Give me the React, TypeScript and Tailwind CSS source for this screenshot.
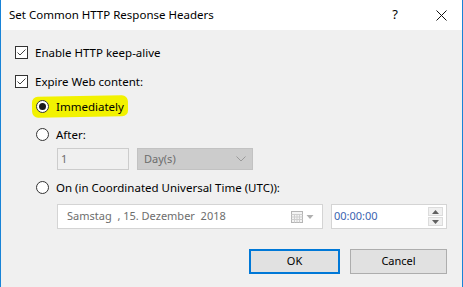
import React from 'react';

const font = { fontFamily: '"Noto Sans", "Open Sans", sans-serif' };

function CheckBox() {
  return (
    <span className="w-[13px] h-[13px] border border-[#333333] bg-white flex items-center justify-center shrink-0">
      <svg width="11" height="11" viewBox="0 0 11 11">
        <path d="M1.5 5.5 L4 8 L9.5 2.5" fill="none" stroke="#444444" strokeWidth="1" />
      </svg>
    </span>
  );
}

function Radio({ checked }: { checked?: boolean }) {
  return (
    <span className="w-[13px] h-[13px] rounded-full border border-[#333333] bg-white flex items-center justify-center shrink-0">
      {checked && <span className="w-[7px] h-[7px] rounded-full bg-[#1a1a1a]"></span>}
    </span>
  );
}

function Chevron() {
  return (
    <svg width="10" height="6" viewBox="0 0 10 6">
      <path d="M0.5 0.5 L5 5 L9.5 0.5" fill="none" stroke="#9a9a9a" strokeWidth="1" />
    </svg>
  );
}

export default function App() {
  return (
    <div className="w-[463px] h-[287px] bg-[#f0f0f0] border-l border-r border-[#1883d7] flex flex-col text-[11px] text-black overflow-hidden" style={font}>
      {/* title bar */}
      <div className="h-[30px] bg-white flex items-center pl-[8px] shrink-0">
        <span className="flex-1 text-[11.5px]">Set Common HTTP Response Headers</span>
        <span className="w-[14px] text-center text-[13px] mr-[34px]">?</span>
        <svg width="11" height="11" viewBox="0 0 11 11" className="mr-[15px]">
          <path d="M0.5 0.5 L10.5 10.5 M10.5 0.5 L0.5 10.5" stroke="#111111" strokeWidth="1" />
        </svg>
      </div>

      <div className="flex flex-col pl-[14px] pt-[16px] text-[11.5px]">
        <div className="h-[13px] flex items-center gap-[7px]">
          <CheckBox />
          <span>Enable HTTP keep-alive</span>
        </div>
        <div className="h-[13px] flex items-center gap-[7px] mt-[16px]">
          <CheckBox />
          <span>Expire Web content:</span>
        </div>

        <div className="flex flex-col pl-[21px]">
          <div className="relative h-[13px] flex items-center gap-[7px] mt-[12px]">
            <span className="absolute left-[-4px] top-[-4px] w-[96px] h-[21px] bg-[#f2f200] rounded-[6px] -rotate-1"></span>
            <span className="relative z-10 flex items-center gap-[7px]">
              <Radio checked />
              <span>Immediately</span>
            </span>
          </div>
          <div className="h-[13px] flex items-center gap-[7px] mt-[15px]">
            <Radio />
            <span>After:</span>
          </div>
          <div className="flex items-center gap-[8px] mt-[7px] pl-[21px] text-[11px]">
            <div className="w-[72px] h-[22px] border border-[#cccccc] bg-[#f0f0f0] flex items-center pl-[3px] text-[#6d6d6d]">1</div>
            <div className="w-[116px] h-[22px] border border-[#c2c2c2] bg-[#cccccc] flex items-center pl-[6px] pr-[6px] text-[#6d6d6d]">
              <span className="flex-1">Day(s)</span>
              <Chevron />
            </div>
          </div>
          <div className="h-[13px] flex items-center gap-[7px] mt-[11px]">
            <Radio />
            <span>On (in Coordinated Universal Time (UTC)):</span>
          </div>
          <div className="flex items-center gap-[8px] mt-[10px] pl-[21px] text-[11px]">
            <div className="w-[266px] h-[25px] border border-[#d4d4d4] bg-white flex items-center pl-[9px] pr-[4px] text-[#6d6d6d]">
              <span className="flex-1 whitespace-pre">Samstag  , 15. Dezember  2018</span>
              <svg width="12" height="12" viewBox="0 0 12 12">
                <rect x="0.5" y="0.5" width="11" height="11" fill="#f4f4f4" stroke="#b5b5b5" />
                <path d="M0.5 3.5 H11.5 M3.5 3.5 V11.5 M6 3.5 V11.5 M8.5 3.5 V11.5 M0.5 6 H11.5 M0.5 8.5 H11.5" stroke="#cfcfcf" strokeWidth="1" />
              </svg>
              <svg width="10" height="6" viewBox="0 0 10 6" className="ml-[2px] mr-[3px]">
                <path d="M1.5 1 L8.5 1 L5 5 Z" fill="#b0b0b0" />
              </svg>
            </div>
            <div className="w-[116px] h-[25px] border border-[#d4d4d4] bg-white flex items-center pl-[2px] pr-[3px]">
              <span className="flex-1 text-[#3b64b0]">00:00:00</span>
              <div className="flex flex-col w-[15px] h-[19px] gap-[1px]">
                <div className="flex-1 bg-[#f0f0f0] border border-[#dcdcdc] flex items-center justify-center">
                  <svg width="7" height="4" viewBox="0 0 7 4"><path d="M0 4 L3.5 0 L7 4 Z" fill="#606060" /></svg>
                </div>
                <div className="flex-1 bg-[#f0f0f0] border border-[#dcdcdc] flex items-center justify-center">
                  <svg width="7" height="4" viewBox="0 0 7 4"><path d="M0 0 L3.5 4 L7 0 Z" fill="#606060" /></svg>
                </div>
              </div>
            </div>
          </div>
        </div>
      </div>

      <div className="flex justify-end gap-[10px] pr-[15px] mt-[20px]">
        <button className="w-[91px] h-[25px] border-2 border-[#0078d7] bg-[#e1e1e1] text-black flex items-center justify-center">OK</button>
        <button className="w-[97px] h-[25px] border border-[#adadad] bg-[#e1e1e1] text-black flex items-center justify-center">Cancel</button>
      </div>
    </div>
  );
}
